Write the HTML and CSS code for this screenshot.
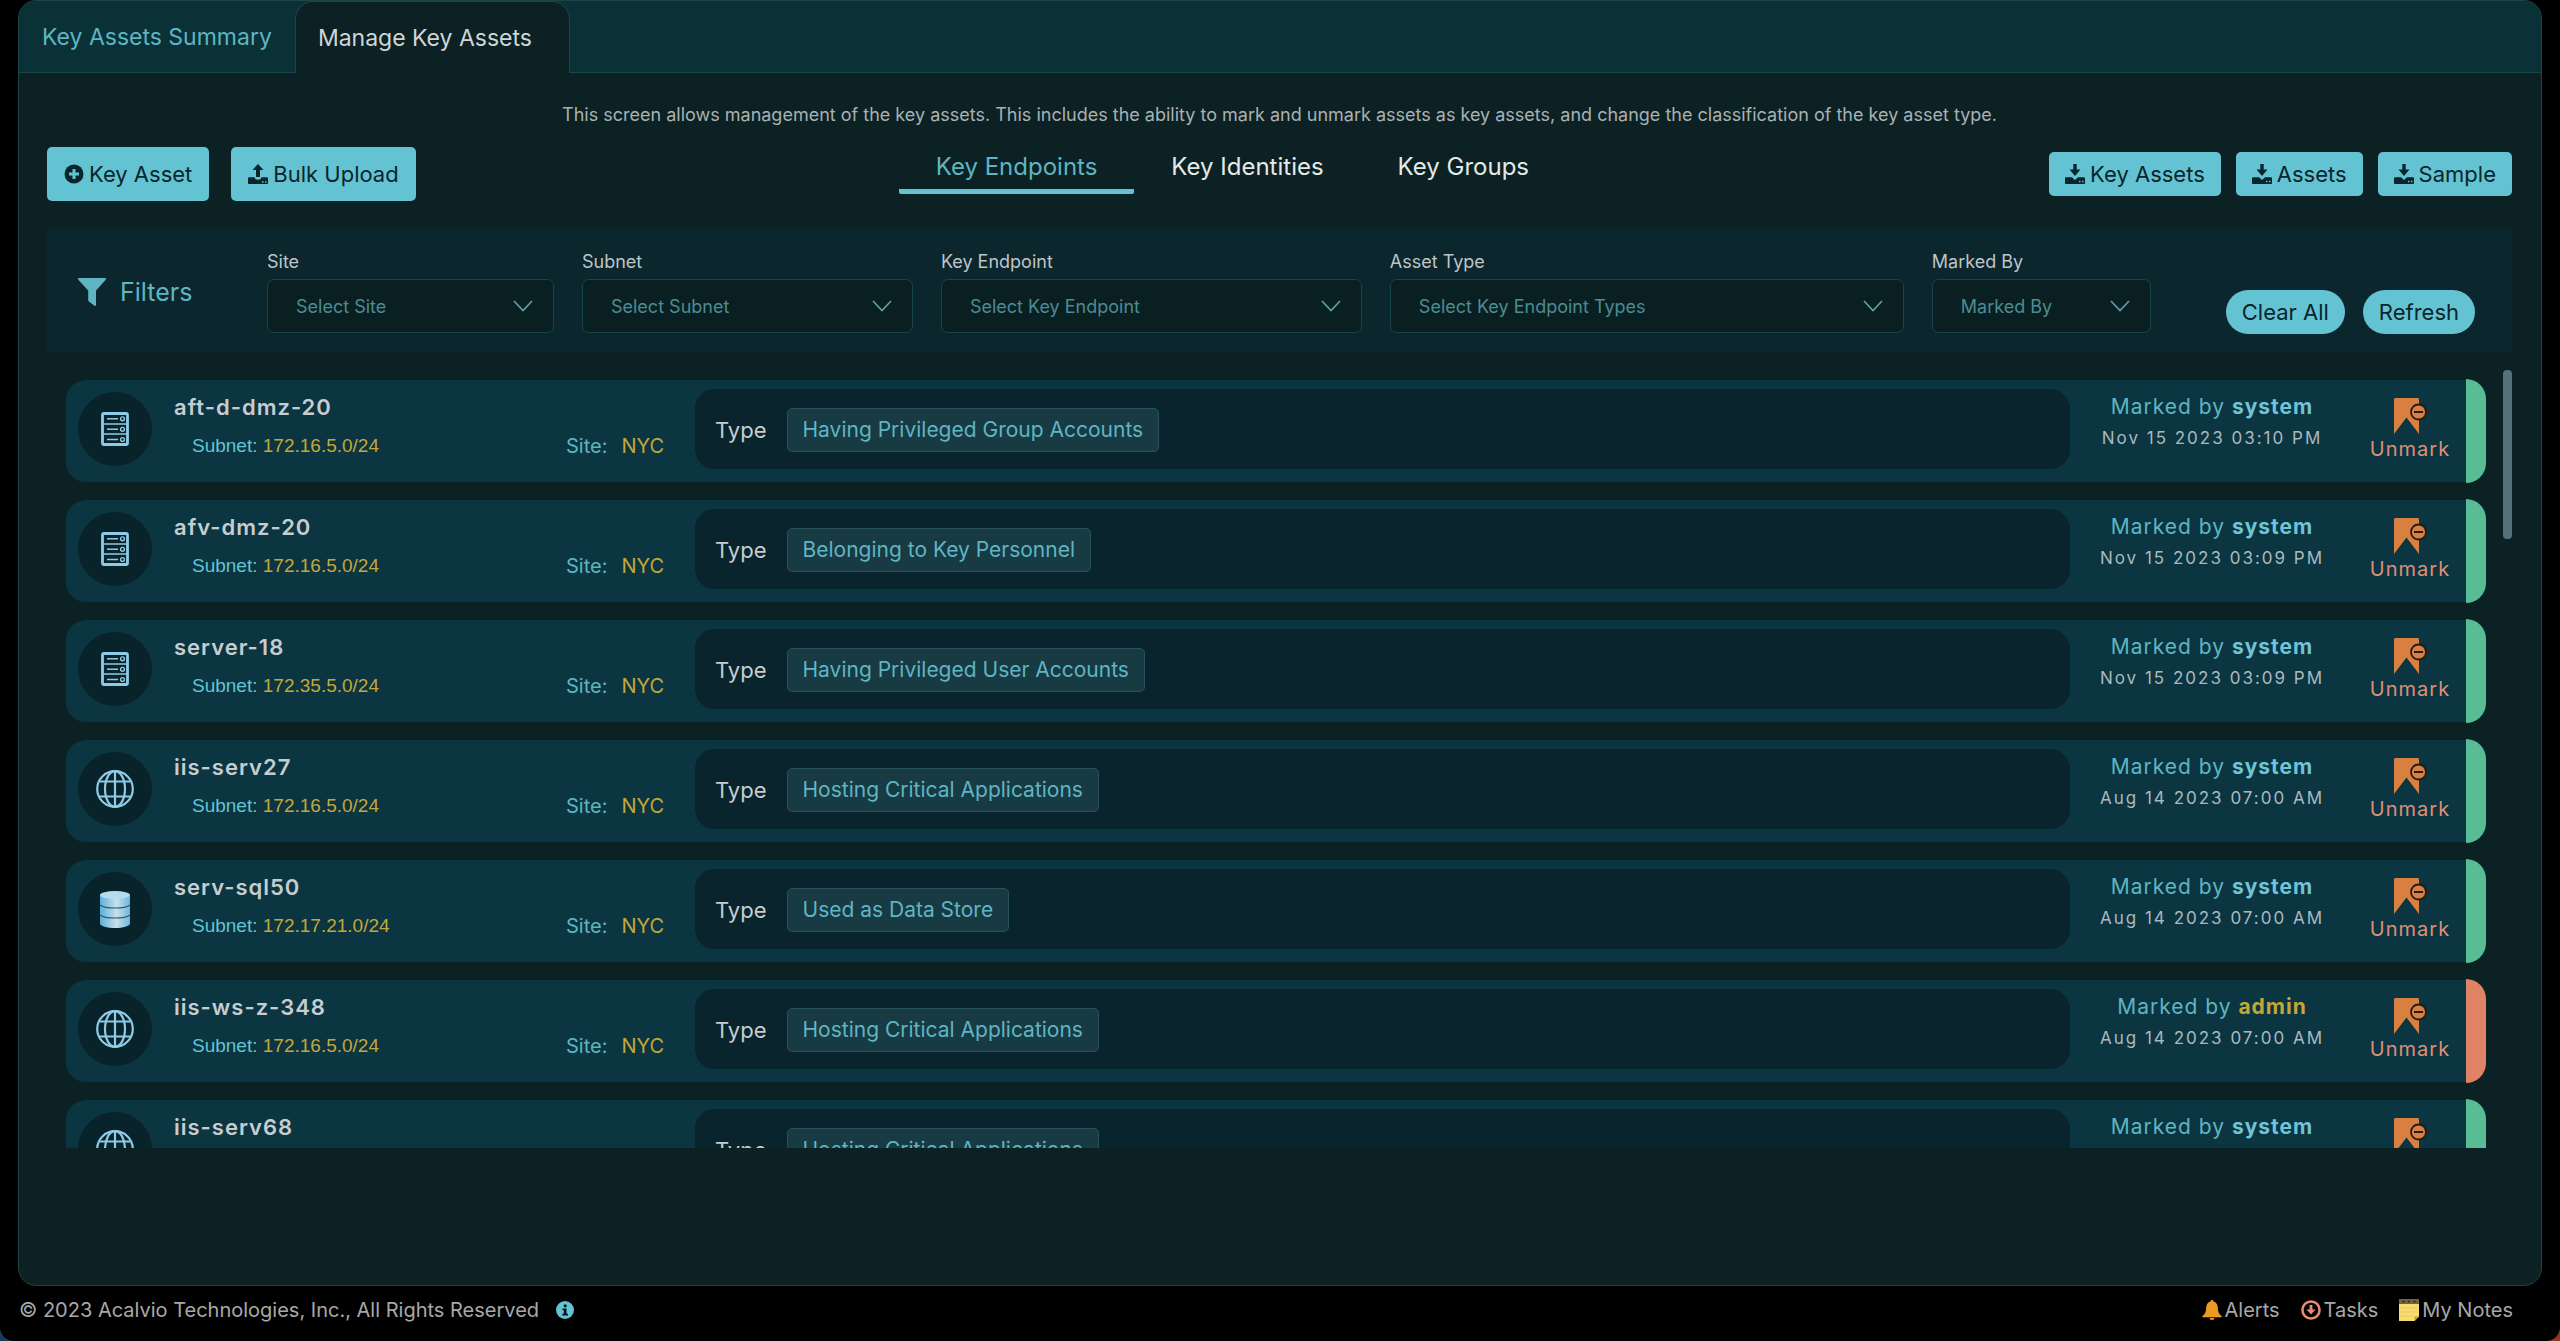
FILE: index.html
```html
<!DOCTYPE html>
<html lang="en">
<head>
<meta charset="utf-8">
<title>Manage Key Assets</title>
<link rel="stylesheet" href="styles.css">
</head>
<body>
<svg class="sprite" aria-hidden="true">
  <symbol id="i-plus" viewBox="0 0 20 20"><circle cx="10" cy="10" r="9.5" fill="currentColor"/><path d="M10 5v10M5 10h10" stroke="#64c3d2" stroke-width="3"/></symbol>
  <symbol id="i-upload" viewBox="0 0 20 20"><path d="M10 0l5.500 6H12v7H8V6H4.500z" fill="currentColor"/><path d="M0 14.500c0-.8.500-1.300 1.300-1.300H6.500c.3 1.700 1.500 2.500 3.500 2.500s3.200-.8 3.500-2.500h5.200c.8 0 1.300.5 1.300 1.300V19c0 .6-.4 1-1 1H1c-.6 0-1-.4-1-1z" fill="currentColor"/><path d="M14 18h1.500M17 18h1.500" stroke="#64c3d2" stroke-width="1.300"/></symbol>
  <symbol id="i-download" viewBox="0 0 20 20"><path d="M8.300 0h3.400v5.500h3.800L10 12 4.500 5.500h3.800z" fill="currentColor"/><path d="M0 14.500c0-.7.400-1.200 1.200-1.200H7l3 2.700 3-2.700h5.800c.8 0 1.200.5 1.200 1.200V19c0 .6-.4 1-1 1H1c-.6 0-1-.4-1-1z" fill="currentColor"/><path d="M14 17.500h1.500M17 17.500h1.500" stroke="#64c3d2" stroke-width="1.300"/></symbol>
  <symbol id="i-filter" viewBox="0 0 28 28"><path d="M1 0h26c1 0 1.300 1 .700 1.800L18 12.500V27c0 1-1 1.200-1.600.700L11 23.500c-.6-.5-.8-.9-.8-1.600v-9.400L.3 1.800C-.3 1 .1 0 1 0z" fill="currentColor"/></symbol>
  <symbol id="i-chevron" viewBox="0 0 20 12"><path d="M1 1l9 9.500L19 1" fill="none" stroke="currentColor" stroke-width="1.600"/></symbol>
  <symbol id="i-server" viewBox="0 0 28 34"><rect x="1.500" y="1.500" width="25" height="31" rx="1.500" fill="none" stroke="#8fcbe6" stroke-width="2.800"/><path d="M2 12h24M2 22h24" stroke="#8fcbe6" stroke-width="1.600"/><path d="M6 6.800h11M6 17.300h11M6 27.500h11" stroke="#8fcbe6" stroke-width="1.500"/><g fill="none" stroke="#8fcbe6" stroke-width="1.400"><circle cx="21.500" cy="6.800" r="1.900"/><circle cx="21.500" cy="17.300" r="1.900"/><circle cx="21.500" cy="27.500" r="1.900"/></g></symbol>
  <symbol id="i-globe" viewBox="0 0 38 38"><g fill="none" stroke="#8fcbe6" stroke-width="2.200"><circle cx="19" cy="19" r="17.800"/><ellipse cx="19" cy="19" rx="10" ry="17.800"/><path d="M19 1v36M4 11.500h30M4 26.500h30"/></g></symbol>
  <linearGradient id="g-db" x1="0" x2="1" y1="0" y2="0"><stop offset="0" stop-color="#5cb0dc"/><stop offset=".55" stop-color="#c9dfe9"/><stop offset="1" stop-color="#6ab8e0"/></linearGradient>
  <symbol id="i-database" viewBox="0 0 30 37"><path d="M0 4v28.500C0 35 7 37 15 37s15-2 15-4.500V4z" fill="url(#g-db)"/><ellipse cx="15" cy="4" rx="15" ry="4" fill="#b5dcee"/><path d="M0 14c3 2.500 8 3 15 3s12-.5 15-3M0 24c3 2.500 8 3 15 3s12-.5 15-3" fill="none" stroke="#31596e" stroke-width="1.200"/></symbol>
  <symbol id="i-unmark" viewBox="0 0 34 38"><path d="M2.500 1h22c.8 0 1.500.7 1.500 1.500V37L13.500 20.500 1 37V2.500C1 1.700 1.700 1 2.500 1z" fill="#d8803f"/><circle cx="25.500" cy="15" r="7.500" fill="#d8803f" stroke="#2a1a16" stroke-width="1.800"/><path d="M21 15h9" stroke="#2a1a16" stroke-width="2"/></symbol>
  <symbol id="i-info" viewBox="0 0 18 18"><circle cx="9" cy="9" r="9" fill="#64c3d2"/><path d="M6.500 7.500h4v5.300H12v1.700H6.300v-1.700h1.500V9.200H6.500z" fill="#04161a"/><circle cx="9.200" cy="4.800" r="1.600" fill="#04161a"/></symbol>
  <symbol id="i-bell" viewBox="0 0 20 20"><path d="M10 0c.8 0 1.400.6 1.400 1.400 2.900.7 4.400 3 4.400 6 0 4 1 6.500 3.800 8.600v1.200H.4V16c2.800-2.100 3.800-4.600 3.800-8.600 0-3 1.500-5.300 4.400-6C8.600.6 9.200 0 10 0zM7.500 18h5c0 1.200-1.100 2-2.500 2s-2.500-.8-2.500-2z" fill="#eb9a24"/></symbol>
  <symbol id="i-task" viewBox="0 0 18 18"><circle cx="9" cy="9" r="7.700" fill="none" stroke="#e58a73" stroke-width="2.300"/><path d="M7.700 4.500h2.600v4h2.800L9 13 4.900 8.500h2.800z" fill="#e58a73"/></symbol>
  <symbol id="i-note" viewBox="0 0 20 22"><path d="M0 3h20v14.500L15.500 22H0z" fill="#f8dc72"/><path d="M15.500 22v-4.500H20z" fill="#c59d35"/><path d="M0 0h20v5H0z" fill="#6f6344"/><path d="M3.500 2.500h2M9 2.500h2M14.500 2.500h2" stroke="#2b2618" stroke-width="1.500"/><path d="M1 9h18M1 13h18M1 17h14" stroke="#e6c458" stroke-width=".8"/></symbol>
</svg>

<div class="app">
  <main class="panel">
    <nav class="tabs">
      <a class="tab" href="#summary">Key Assets Summary</a>
      <a class="tab tab-active" href="#manage" aria-current="page">Manage Key Assets</a>
    </nav>
    <div class="content">
      <p class="intro">This screen allows management of the key assets. This includes the ability to mark and unmark assets as key assets, and change the classification of the key asset type.</p>
      <div class="toolbar">
        <div class="actions">
          <button class="btn btn-tall" type="button"><svg class="ico"><use href="#i-plus"/></svg>Key Asset</button>
          <button class="btn btn-tall" type="button"><svg class="ico"><use href="#i-upload"/></svg>Bulk Upload</button>
        </div>
        <nav class="subtabs">
          <a class="subtab subtab-active" href="#endpoints">Key Endpoints</a>
          <a class="subtab" href="#identities">Key Identities</a>
          <a class="subtab" href="#groups">Key Groups</a>
        </nav>
        <div class="downloads">
          <button class="btn" type="button"><svg class="ico"><use href="#i-download"/></svg>Key Assets</button>
          <button class="btn" type="button"><svg class="ico"><use href="#i-download"/></svg>Assets</button>
          <button class="btn" type="button"><svg class="ico"><use href="#i-download"/></svg>Sample</button>
        </div>
      </div>

      <form class="filters">
        <div class="filters-title"><svg class="ico-filter"><use href="#i-filter"/></svg>Filters</div>
        <div class="field"><label for="f-site">Site</label><div class="picker"><select id="f-site"><option>Select Site</option></select><svg class="chevron"><use href="#i-chevron"/></svg></div></div>
        <div class="field"><label for="f-subnet">Subnet</label><div class="picker"><select id="f-subnet"><option>Select Subnet</option></select><svg class="chevron"><use href="#i-chevron"/></svg></div></div>
        <div class="field"><label for="f-endpoint">Key Endpoint</label><div class="picker"><select id="f-endpoint"><option>Select Key Endpoint</option></select><svg class="chevron"><use href="#i-chevron"/></svg></div></div>
        <div class="field"><label for="f-type">Asset Type</label><div class="picker"><select id="f-type"><option>Select Key Endpoint Types</option></select><svg class="chevron"><use href="#i-chevron"/></svg></div></div>
        <div class="field"><label for="f-marked">Marked By</label><div class="picker"><select id="f-marked"><option>Marked By</option></select><svg class="chevron"><use href="#i-chevron"/></svg></div></div>
        <div class="filter-actions">
          <button class="btn btn-pill" type="reset">Clear All</button>
          <button class="btn btn-pill" type="button">Refresh</button>
        </div>
      </form>

      <div class="list-wrap">
        <ul class="list">
          <li class="asset">
            <div class="badge"><svg class="ico-server"><use href="#i-server"/></svg></div>
            <div class="info"><h2 class="name">aft-d-dmz-20</h2><p class="subnet">Subnet: <b>172.16.5.0/24</b></p><p class="site">Site: <b>NYC</b></p></div>
            <div class="type">Type <span class="tag">Having Privileged Group Accounts</span></div>
            <div class="marked"><p class="by">Marked by <b>system</b></p><time class="when">Nov 15 2023 03:10 PM</time></div>
            <button class="unmark" type="button"><svg class="ico-unmark"><use href="#i-unmark"/></svg>Unmark</button>
            <div class="edge"></div>
          </li>
          <li class="asset">
            <div class="badge"><svg class="ico-server"><use href="#i-server"/></svg></div>
            <div class="info"><h2 class="name">afv-dmz-20</h2><p class="subnet">Subnet: <b>172.16.5.0/24</b></p><p class="site">Site: <b>NYC</b></p></div>
            <div class="type">Type <span class="tag">Belonging to Key Personnel</span></div>
            <div class="marked"><p class="by">Marked by <b>system</b></p><time class="when">Nov 15 2023 03:09 PM</time></div>
            <button class="unmark" type="button"><svg class="ico-unmark"><use href="#i-unmark"/></svg>Unmark</button>
            <div class="edge"></div>
          </li>
          <li class="asset">
            <div class="badge"><svg class="ico-server"><use href="#i-server"/></svg></div>
            <div class="info"><h2 class="name">server-18</h2><p class="subnet">Subnet: <b>172.35.5.0/24</b></p><p class="site">Site: <b>NYC</b></p></div>
            <div class="type">Type <span class="tag">Having Privileged User Accounts</span></div>
            <div class="marked"><p class="by">Marked by <b>system</b></p><time class="when">Nov 15 2023 03:09 PM</time></div>
            <button class="unmark" type="button"><svg class="ico-unmark"><use href="#i-unmark"/></svg>Unmark</button>
            <div class="edge"></div>
          </li>
          <li class="asset">
            <div class="badge"><svg class="ico-globe"><use href="#i-globe"/></svg></div>
            <div class="info"><h2 class="name">iis-serv27</h2><p class="subnet">Subnet: <b>172.16.5.0/24</b></p><p class="site">Site: <b>NYC</b></p></div>
            <div class="type">Type <span class="tag">Hosting Critical Applications</span></div>
            <div class="marked"><p class="by">Marked by <b>system</b></p><time class="when">Aug 14 2023 07:00 AM</time></div>
            <button class="unmark" type="button"><svg class="ico-unmark"><use href="#i-unmark"/></svg>Unmark</button>
            <div class="edge"></div>
          </li>
          <li class="asset">
            <div class="badge"><svg class="ico-database"><use href="#i-database"/></svg></div>
            <div class="info"><h2 class="name">serv-sql50</h2><p class="subnet">Subnet: <b>172.17.21.0/24</b></p><p class="site">Site: <b>NYC</b></p></div>
            <div class="type">Type <span class="tag">Used as Data Store</span></div>
            <div class="marked"><p class="by">Marked by <b>system</b></p><time class="when">Aug 14 2023 07:00 AM</time></div>
            <button class="unmark" type="button"><svg class="ico-unmark"><use href="#i-unmark"/></svg>Unmark</button>
            <div class="edge"></div>
          </li>
          <li class="asset asset-admin">
            <div class="badge"><svg class="ico-globe"><use href="#i-globe"/></svg></div>
            <div class="info"><h2 class="name">iis-ws-z-348</h2><p class="subnet">Subnet: <b>172.16.5.0/24</b></p><p class="site">Site: <b>NYC</b></p></div>
            <div class="type">Type <span class="tag">Hosting Critical Applications</span></div>
            <div class="marked"><p class="by">Marked by <b>admin</b></p><time class="when">Aug 14 2023 07:00 AM</time></div>
            <button class="unmark" type="button"><svg class="ico-unmark"><use href="#i-unmark"/></svg>Unmark</button>
            <div class="edge"></div>
          </li>
          <li class="asset">
            <div class="badge"><svg class="ico-globe"><use href="#i-globe"/></svg></div>
            <div class="info"><h2 class="name">iis-serv68</h2></div>
            <div class="type">Type <span class="tag">Hosting Critical Applications</span></div>
            <div class="marked"><p class="by">Marked by <b>system</b></p></div>
            <button class="unmark" type="button" aria-label="Unmark"><svg class="ico-unmark"><use href="#i-unmark"/></svg></button>
            <div class="edge"></div>
          </li>
        </ul>
        <div class="scrollbar"><div class="thumb"></div></div>
      </div>
    </div>
  </main>
  <footer class="footer">
    <span>© 2023 Acalvio Technologies, Inc., All Rights Reserved</span>
    <svg class="ico-info"><use href="#i-info"/></svg>
    <nav class="footer-links">
      <a href="#alerts"><svg class="ico"><use href="#i-bell"/></svg>Alerts</a>
      <a href="#tasks"><svg class="ico"><use href="#i-task"/></svg>Tasks</a>
      <a href="#notes"><svg class="ico-note"><use href="#i-note"/></svg>My Notes</a>
    </nav>
  </footer>
</div>
</body>
</html>
```
FILE: styles.css
```css
:root {
  --accent: #64c3d2;
  --teal: #5fb5c3;
  --gold: #c4a73a;
  --base: #0b2124;
  --line: #1d4448;
}

* { box-sizing: border-box; }

html { background: linear-gradient(90deg, #1d3a5c 50%, #8a3a26 50%); }

body {
  margin: 0;
  font-family: Inter, "Liberation Sans", sans-serif;
  font-size: 22px;
  color: #c6cdd0;
}

h2, p, ul { margin: 0; padding: 0; }
a { color: inherit; text-decoration: none; }
button, select { font-family: inherit; }
svg { display: block; flex: none; }
.sprite { position: absolute; width: 0; height: 0; }

.app {
  display: flex;
  flex-direction: column;
  height: 100vh;
  padding: 0 18px;
  background: #000;
  border-radius: 0 0 14px 14px;
}

.panel {
  display: flex;
  flex-direction: column;
  flex: 1;
  min-height: 0;
  background: var(--base);
  border: 1px solid var(--line);
  border-radius: 18px;
  overflow: hidden;
}

/* Page tabs */
.tabs {
  display: flex;
  height: 72px;
  flex: none;
  background: #0a3136;
  box-shadow: inset 0 -1px var(--line);
}
.tab {
  display: flex;
  align-items: center;
  padding: 0 23px;
  font-size: 23px;
  color: var(--teal);
}
.tab-active {
  padding: 0 37px 0 22px;
  color: #d0d6d7;
  background: var(--base);
  border: 1px solid var(--line);
  border-bottom: 0;
  border-radius: 18px 18px 0 0;
}

.content {
  display: flex;
  flex-direction: column;
  padding: 0 29px 0 28px;
}
.intro {
  padding-top: 30px;
  font-size: 18px;
  line-height: 24px;
  text-align: center;
  color: #a9b1b2;
}

/* Toolbar */
.toolbar {
  display: flex;
  justify-content: space-between;
  align-items: center;
  height: 54px;
  margin: 20px 0 27px;
}
.actions { display: flex; gap: 22px; }
.downloads { display: flex; gap: 15px; }
.btn {
  display: flex;
  align-items: center;
  gap: 5px;
  height: 44px;
  padding: 0 16px;
  border: 0;
  border-radius: 5px;
  background: var(--accent);
  color: #08262c;
  font-size: 22px;
  white-space: nowrap;
}
.btn-tall { height: 54px; padding: 0 17px; }
.btn-pill { border-radius: 22px; }
.ico { width: 20px; height: 20px; }

.subtabs { display: flex; align-self: start; }
.subtab {
  padding: 6px 37px 8px;
  font-size: 24px;
  line-height: 28px;
  color: #e4eaea;
  border-bottom: 5px solid transparent;
}
.subtab-active { color: var(--teal); border-color: var(--accent); border-radius: 2px; }

/* Filters */
.filters {
  display: flex;
  gap: 28px;
  height: 124px;
  padding: 22px 37px 18px 31px;
  background: #0c262e;
}
.filters-title {
  display: flex;
  align-items: center;
  gap: 14px;
  width: 161px;
  font-size: 25px;
  color: var(--teal);
}
.ico-filter { width: 28px; height: 28px; }
.field { display: flex; flex-direction: column; gap: 5px; }
.field:nth-child(2) { flex: 287 1 0; }
.field:nth-child(3) { flex: 331 1 0; }
.field:nth-child(4) { flex: 421 1 0; }
.field:nth-child(5) { flex: 514 1 0; }
.field:nth-child(6) { flex: 219 1 0; }
.field label { font-size: 18px; line-height: 24px; color: #bcc5c7; }
.picker { display: flex; align-items: center; position: relative; }
.picker select {
  appearance: none;
  width: 100%;
  height: 54px;
  padding: 0 48px 0 28px;
  font-size: 18px;
  color: #4a8d92;
  background: #0a1f22;
  border: 1px solid #17454a;
  border-radius: 7px;
}
.chevron {
  position: absolute;
  right: 21px;
  width: 20px;
  height: 12px;
  color: #5fa3ab;
  pointer-events: none;
}
.filter-actions {
  display: flex;
  align-items: flex-end;
  gap: 18px;
  padding-left: 47px;
}

/* Asset list */
.list-wrap {
  display: flex;
  justify-content: space-between;
  height: calc(100vh - 563px);
  margin-top: 18px;
}
.list {
  flex: 1;
  display: flex;
  flex-direction: column;
  gap: 18px;
  padding: 10px 17px 0 19px;
  overflow: hidden;
  list-style: none;
}
.asset {
  display: flex;
  flex: none;
  height: 102px;
  background: #0b3541;
  border-radius: 20px;
}
.badge {
  display: flex;
  align-items: center;
  justify-content: center;
  width: 74px;
  height: 74px;
  margin: 12px 22px 0 12px;
  border-radius: 50%;
  background: #09232b;
}
.ico-server { width: 28px; height: 34px; }
.ico-globe { width: 38px; height: 38px; }
.ico-database { width: 30px; height: 37px; }

.info {
  display: grid;
  grid-template-columns: 374px 1fr;
  grid-template-rows: 40px 24px;
  row-gap: 7px;
  width: 521px;
  padding-top: 7px;
}
.name {
  grid-column: 1 / 3;
  font-size: 22px;
  font-weight: 600;
  line-height: 40px;
  letter-spacing: 1px;
}
.subnet {
  padding-left: 18px;
  font-family: "Liberation Sans", Arial, sans-serif;
  font-size: 19px;
  line-height: 24px;
  color: var(--accent);
}
.site {
  display: flex;
  gap: 14px;
  padding-left: 18px;
  font-size: 20px;
  line-height: 24px;
  color: var(--teal);
}
.subnet b, .site b { font-weight: 400; color: var(--gold); }

.type {
  display: flex;
  flex: 1;
  align-items: center;
  gap: 20px;
  height: 80px;
  margin-top: 9px;
  padding: 2px 20px 0;
  border-radius: 20px;
  background: #09242c;
}
.tag {
  padding: 7px 15px;
  font-size: 21px;
  line-height: 28px;
  color: var(--teal);
  background: #173a43;
  border: 1px solid #2a525a;
  border-radius: 5px;
}

.marked {
  width: 284px;
  padding-top: 13px;
  text-align: center;
}
.by { font-size: 21px; line-height: 28px; letter-spacing: 1px; color: var(--teal); }
.by b { color: #6fc5d6; }
.asset-admin .by b { color: var(--gold); }
.when {
  display: block;
  font-size: 17px;
  line-height: 34px;
  letter-spacing: 2px;
  color: #aab9bf;
}
.unmark {
  display: flex;
  flex-direction: column;
  align-items: center;
  width: 112px;
  padding: 17px 0 0;
  border: 0;
  background: none;
  font-size: 20px;
  line-height: 28px;
  letter-spacing: 1px;
  color: #de9077;
}
.ico-unmark { width: 34px; height: 38px; }
.edge {
  width: 20px;
  height: 104px;
  margin-top: -1px;
  background: #58bd95;
  border-radius: 0 20px 20px 0;
}
.asset-admin .edge { background: #e08265; }

.scrollbar { width: 9px; }
.thumb { height: 169px; border-radius: 4px; background: #56717b; }

/* Footer */
.footer {
  display: flex;
  align-items: center;
  height: 55px;
  padding: 0 29px 7px 1px;
  font-size: 20px;
  color: #a8a8a8;
}
.ico-info { width: 18px; height: 18px; margin-left: 17px; }
.footer-links { display: flex; gap: 21px; margin-left: auto; }
.footer-links a { display: flex; align-items: center; gap: 3px; }
.ico-note { width: 20px; height: 22px; }
```
